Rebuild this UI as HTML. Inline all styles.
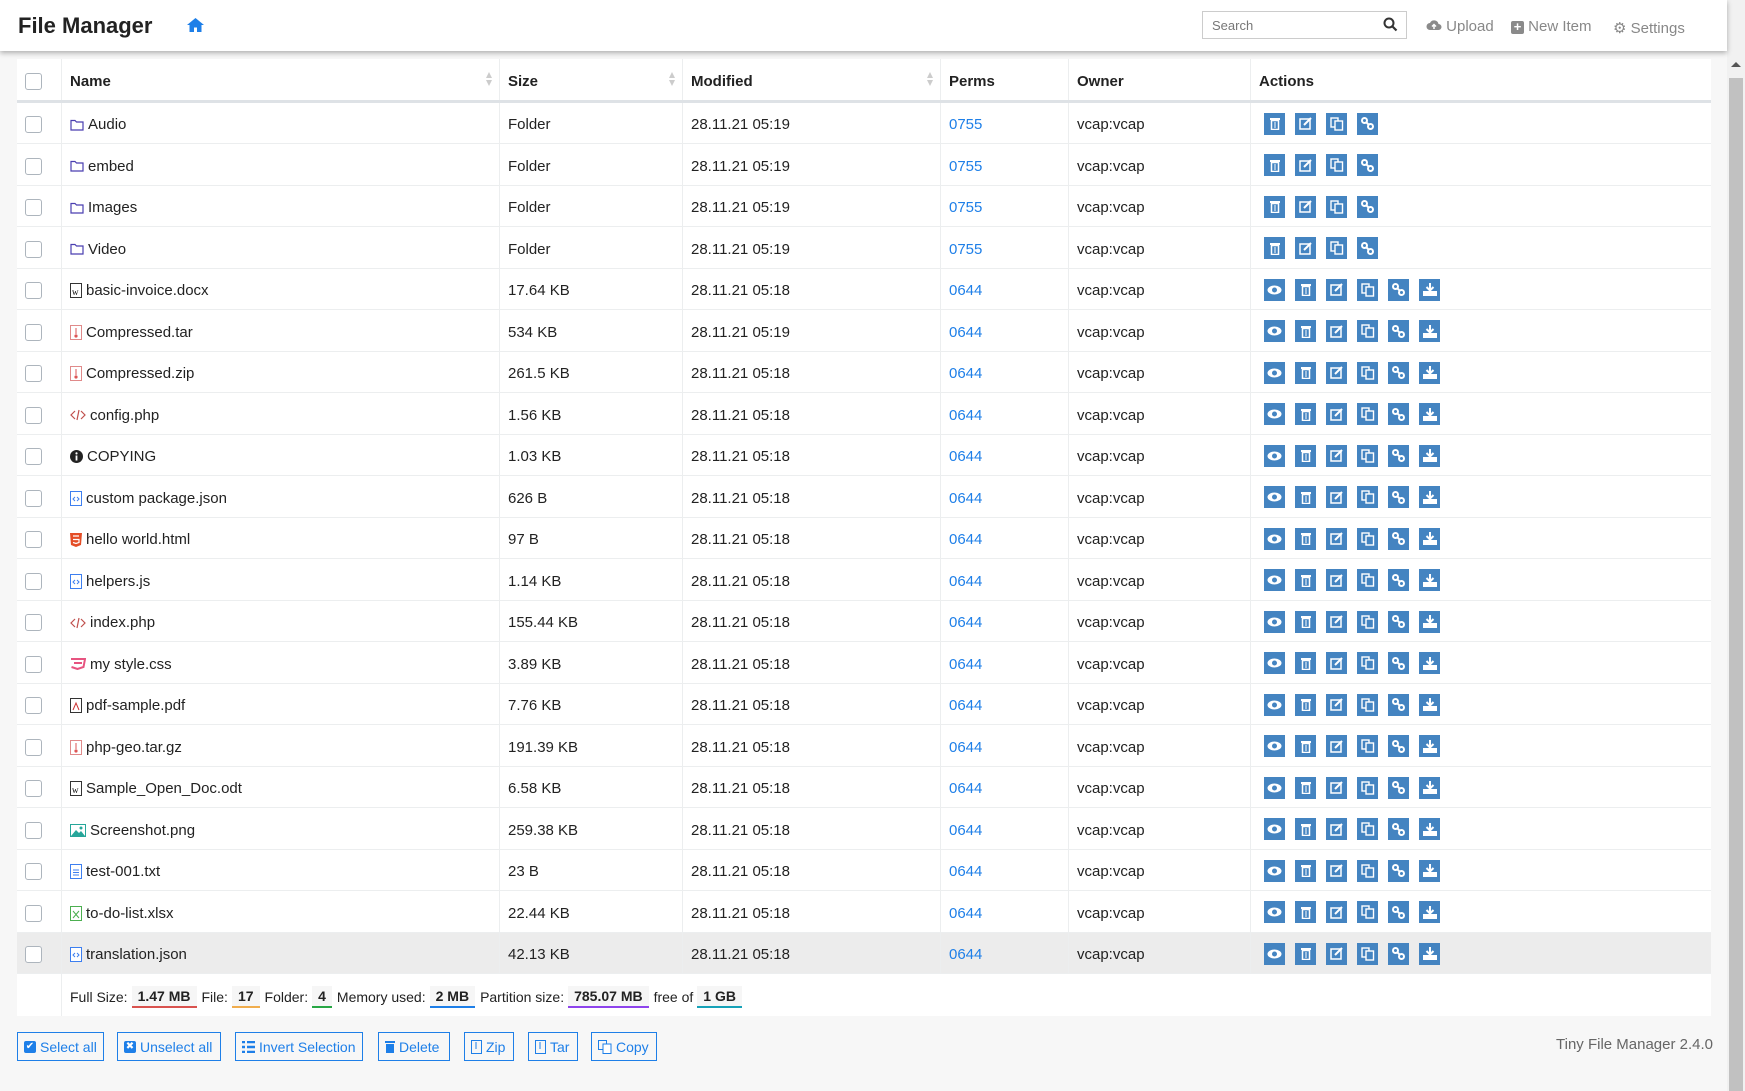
<!DOCTYPE html>
<html><head><meta charset="utf-8"><style>
*{box-sizing:border-box;margin:0;padding:0}
body{width:1745px;height:1091px;overflow:hidden;background:#f7f7f7;font-family:"Liberation Sans",sans-serif;font-size:15px;color:#222;position:relative}
.hdr{position:absolute;left:0;top:0;width:1727px;height:51px;background:#fff;box-shadow:0 2px 5px rgba(0,0,0,.3);z-index:2}
.title{position:absolute;left:18px;top:13px;font-size:22px;font-weight:bold;color:#222}
.search{position:absolute;left:1202px;top:11px;width:205px;height:28px;border:1px solid #ccc;background:#fff;font-size:13px;color:#777;padding:6px 9px}
.nav{position:absolute;top:18px;font-size:15px;color:#888;white-space:nowrap}
.sb{position:absolute;left:1727px;top:0;width:18px;height:1091px;background:#f1f1f1}
.sbt{position:absolute;left:1729px;top:78px;width:14px;height:1013px;background:#c1c1c1}
.tbl{position:absolute;left:17px;top:59px;width:1694px;background:#fff}
.row{position:absolute;left:0;width:1694px;height:41.5px;border-bottom:1px solid #eceeef}
.cell{position:absolute;top:0;height:100%;border-left:1px solid #eceeef;display:flex;align-items:center;padding-left:8px;padding-top:4px;white-space:nowrap}
.c0{left:0;width:44px;border-left:none;padding-left:8px}
.c1{left:44px;width:438px}.c2{left:482px;width:183px}.c3{left:665px;width:258px}.c4{left:923px;width:128px}.c5{left:1051px;width:182px}.c6{left:1233px;width:461px}
.cb{width:17px;height:17px;border:1px solid #adb5bd;border-radius:3px;background:#fff}
.th{font-weight:bold}
.sort{position:absolute;right:6px;top:12px;width:8px;height:16px}
.perm{color:#1e7fe8}
.ab{width:21px;height:22px;background:#4484c1;margin-right:10px;display:inline-flex;align-items:center;justify-content:center}
.fi{margin-right:4px;display:inline-flex}
.btn{position:absolute;top:1032px;height:29px;border:1px solid #1e7fe8;color:#1e7fe8;font-size:14px;display:flex;align-items:center;padding:0 6px;gap:4px;white-space:nowrap}
.bd{display:inline-block;font-weight:bold;font-size:14px;padding:2px 6px 2px;background:#f6f6f6;margin:0 5px 0 4px;border-bottom:2px solid}
</style></head><body>
<div class="hdr">
<div class="title">File Manager</div>
<svg style="position:absolute;left:186px;top:17px" width="19" height="16" viewBox="0 0 19 16"><path d="M9.5 1L1 8h2.5v7h4.5v-4.5h3V15h4.5V8H18z" fill="#1e7fe8"/></svg>
<div class="search">Search</div>
<svg style="position:absolute;left:1383px;top:17px" width="15" height="15" viewBox="0 0 15 15"><circle cx="6" cy="6" r="4.5" fill="none" stroke="#333" stroke-width="2"/><path d="M9.5 9.5l4 4" stroke="#333" stroke-width="2.2"/></svg>
<div class="nav" style="left:1426px"><svg width="16" height="12" viewBox="0 0 16 12"><path d="M4 11a3.5 3.5 0 010-7 4.5 4.5 0 018.5 1A3 3 0 0112.5 11z" fill="#8a8a8a"/><path d="M8 10V5.5M6 7.5l2-2 2 2" stroke="#fff" stroke-width="1.5" fill="none"/></svg> Upload</div>
<div class="nav" style="left:1511px"><span style="display:inline-block;width:13px;height:13px;background:#8a8a8a;border-radius:2px;color:#fff;font-size:13px;line-height:12px;text-align:center;font-weight:bold">+</span> New Item</div>
<div class="nav" style="left:1613px;top:19px">⚙ Settings</div>
</div>
<div class="sb"></div><div class="sbt"></div>
<div style="position:absolute;left:1731px;top:57px;width:0;height:0;border:5px solid transparent;border-bottom-color:#555"></div>

<div class="tbl" id="t" style="height:957px">
<div class="row" style="top:0;height:43.5px;border-bottom:3px solid #dee2e6">
<div class="cell c0"><div class="cb"></div></div>
<div class="cell c1 th">Name<svg class="sort" viewBox="0 0 8 16"><path d="M4 1L7 7H1zM4 15L7 9H1z" fill="#ccc"/></svg></div>
<div class="cell c2 th">Size<svg class="sort" viewBox="0 0 8 16"><path d="M4 1L7 7H1zM4 15L7 9H1z" fill="#ccc"/></svg></div>
<div class="cell c3 th">Modified<svg class="sort" viewBox="0 0 8 16"><path d="M4 1L7 7H1zM4 15L7 9H1z" fill="#ccc"/></svg></div>
<div class="cell c4 th">Perms</div>
<div class="cell c5 th">Owner</div>
<div class="cell c6 th">Actions</div>
</div>
</div>

<div class="btn" style="left:17px;width:87px"><span style="display:inline-block;width:12px;height:12px;background:#1e7fe8;border-radius:2px;color:#fff;font-size:10px;line-height:12px;text-align:center">✔</span>Select all</div>
<div class="btn" style="left:117px;width:104px"><span style="display:inline-block;width:12px;height:12px;background:#1e7fe8;border-radius:2px;color:#fff;font-size:10px;line-height:12px;text-align:center">✖</span>Unselect all</div>
<div class="btn" style="left:235px;width:128px"><svg width="13" height="12"><path d="M0 1h3M5 1h8M0 6h3M5 6h8M0 11h3M5 11h8" stroke="#1e7fe8" stroke-width="2.4"/></svg>Invert Selection</div>
<div class="btn" style="left:378px;width:72px"><svg width="10" height="13"><rect x="0" y="1" width="10" height="2" fill="#1e7fe8"/><rect x="1" y="4" width="8" height="9" fill="#1e7fe8"/></svg>Delete</div>
<div class="btn" style="left:464px;width:50px"><svg width="11" height="14"><rect x=".5" y=".5" width="10" height="13" fill="none" stroke="#1e7fe8"/><path d="M5 2v7" stroke="#1e7fe8"/></svg>Zip</div>
<div class="btn" style="left:528px;width:50px"><svg width="11" height="14"><rect x=".5" y=".5" width="10" height="13" fill="none" stroke="#1e7fe8"/><path d="M5 2v7" stroke="#1e7fe8"/></svg>Tar</div>
<div class="btn" style="left:591px;width:66px"><svg width="14" height="14"><rect x=".5" y=".5" width="8" height="9" fill="none" stroke="#1e7fe8"/><rect x="5" y="4" width="8" height="9.5" fill="#fff" stroke="#1e7fe8"/></svg>Copy</div>
<div style="position:absolute;left:1556px;top:1036px;font-size:15px;color:#666">Tiny File Manager 2.4.0</div>

<script>
const I={
folder:'<svg width="14" height="12" viewBox="0 0 14 12"><path d="M1 1.5h4l1.5 1.5H13v8H1z" fill="none" stroke="#4a3fb0" stroke-width="1.2"/></svg>',
word:'<svg width="12" height="15"><rect x=".5" y=".5" width="11" height="14" fill="#fff" stroke="#333"/><text x="2" y="12" font-size="9" font-family="Liberation Serif">w</text></svg>',
zip:'<svg width="12" height="15"><rect x=".5" y=".5" width="11" height="14" fill="#fff" stroke="#e08a8a"/><path d="M6 3v6" stroke="#d55"/><circle cx="6" cy="11" r="1.6" fill="#d55"/></svg>',
code:'<svg width="16" height="12"><path d="M5 2L1 6l4 4M11 2l4 4-4 4M9 1L7 11" fill="none" stroke="#c0504d" stroke-width="1.2"/></svg>',
info:'<svg width="13" height="13"><circle cx="6.5" cy="6.5" r="6.5" fill="#222"/><rect x="5.6" y="5.5" width="1.8" height="5" fill="#fff"/><circle cx="6.5" cy="3.4" r="1.1" fill="#fff"/></svg>',
json:'<svg width="12" height="15"><rect x=".5" y=".5" width="11" height="14" fill="#fff" stroke="#3d7ff0"/><path d="M5 6L3 8l2 2M7 6l2 2-2 2" fill="none" stroke="#3d7ff0"/></svg>',
html:'<svg width="12" height="14"><path d="M0 0h12l-1 12-5 2-5-2z" fill="#e44d26"/><path d="M3 3h6M3 6.5h6v3l-3 1-3-1" fill="none" stroke="#fff" stroke-width="1.2"/></svg>',
css:'<svg width="16" height="12"><path d="M1 1h14l-1.5 8-6 2-6-2" fill="none" stroke="#e75480" stroke-width="2"/><path d="M4 5h8" stroke="#e75480" stroke-width="2"/></svg>',
pdf:'<svg width="12" height="15"><rect x=".5" y=".5" width="11" height="14" fill="#fff" stroke="#333"/><path d="M3 12l3-7 3 7" fill="none" stroke="#c33"/></svg>',
img:'<svg width="16" height="13"><rect x=".5" y=".5" width="15" height="12" fill="#fff" stroke="#26a69a"/><path d="M1 12l5-6 3 3 2-2 4 5z" fill="#26a69a"/><circle cx="11" cy="4" r="1.5" fill="#26a69a"/></svg>',
txt:'<svg width="12" height="15"><rect x=".5" y=".5" width="11" height="14" fill="#fff" stroke="#3d7ff0"/><path d="M3 6h6M3 8.5h6M3 11h6" stroke="#3d7ff0"/></svg>',
xls:'<svg width="12" height="15"><rect x=".5" y=".5" width="11" height="14" fill="#fff" stroke="#4caf50"/><path d="M3 5l6 7M9 5l-6 7" stroke="#4caf50"/></svg>'
};
const A={
eye:'<svg width="15" height="10"><ellipse cx="7.5" cy="5" rx="7" ry="4.5" fill="#fff"/><circle cx="7.5" cy="5" r="2.5" fill="#4484c1"/></svg>',
del:'<svg width="10" height="13"><rect x="0" y="1" width="10" height="2" fill="#fff"/><rect x="1.5" y="3.5" width="7" height="9" fill="none" stroke="#fff" stroke-width="1.5"/><path d="M5 5v6" stroke="#fff"/></svg>',
edit:'<svg width="14" height="13"><rect x="1" y="2" width="10" height="10" fill="none" stroke="#fff" stroke-width="1.5"/><path d="M5 8l7-7" stroke="#fff" stroke-width="2"/></svg>',
copy:'<svg width="14" height="14"><rect x="1" y="1" width="7" height="9" fill="none" stroke="#fff" stroke-width="1.4"/><rect x="5" y="4" width="7.5" height="9" fill="#4484c1" stroke="#fff" stroke-width="1.4"/></svg>',
link:'<svg width="13" height="13"><circle cx="3.5" cy="3.5" r="2.5" fill="none" stroke="#fff" stroke-width="2"/><circle cx="9.5" cy="9.5" r="2.5" fill="none" stroke="#fff" stroke-width="2"/><path d="M5 5l3 3" stroke="#fff" stroke-width="2"/></svg>',
dl:'<svg width="14" height="13"><path d="M7 0v7M3.5 4L7 7.5 10.5 4" fill="none" stroke="#fff" stroke-width="2"/><rect x="0" y="8" width="14" height="5" fill="#fff"/></svg>'
};
const rows=[
['folder','Audio','Folder','05:19','0755',1],['folder','embed','Folder','05:19','0755',1],['folder','Images','Folder','05:19','0755',1],['folder','Video','Folder','05:19','0755',1],
['word','basic-invoice.docx','17.64 KB','05:18'],['zip','Compressed.tar','534 KB','05:19'],['zip','Compressed.zip','261.5 KB','05:18'],['code','config.php','1.56 KB','05:18'],['info','COPYING','1.03 KB','05:18'],['json','custom package.json','626 B','05:18'],['html','hello world.html','97 B','05:18'],['json','helpers.js','1.14 KB','05:18'],['code','index.php','155.44 KB','05:18'],['css','my style.css','3.89 KB','05:18'],['pdf','pdf-sample.pdf','7.76 KB','05:18'],['zip','php-geo.tar.gz','191.39 KB','05:18'],['word','Sample_Open_Doc.odt','6.58 KB','05:18'],['img','Screenshot.png','259.38 KB','05:18'],['txt','test-001.txt','23 B','05:18'],['xls','to-do-list.xlsx','22.44 KB','05:18'],['json','translation.json','42.13 KB','05:18']];
let h='';
rows.forEach((r,i)=>{
 const top=43.5+i*41.5;
 const acts=(r[5]?['del','edit','copy','link']:['eye','del','edit','copy','link','dl']).map(k=>'<span class="ab">'+A[k]+'</span>').join('');
 h+=`<div class="row" style="top:${top}px;${i==20?'background:#ececec;':''}"><div class="cell c0"><div class="cb"></div></div><div class="cell c1"><span class="fi">${I[r[0]]}</span>${r[1]}</div><div class="cell c2">${r[2]}</div><div class="cell c3">28.11.21 ${r[3]}</div><div class="cell c4 perm">${r[4]||'0644'}</div><div class="cell c5">vcap:vcap</div><div class="cell c6" style="padding-left:13px;padding-top:2px">${acts}</div></div>`;
});
h+=`<div class="row" style="top:${43.5+21*41.5}px;height:42px;border-bottom:none"><div class="cell c0"></div><div class="cell c1" style="width:1650px;font-size:14px">Full Size:<span class="bd" style="border-color:#d9534f">1.47 MB</span>File:<span class="bd" style="border-color:#f0ad4e">17</span>Folder:<span class="bd" style="border-color:#28a745">4</span>Memory used:<span class="bd" style="border-color:#1e7fe8">2 MB</span>Partition size:<span class="bd" style="border-color:#8e44ec">785.07 MB</span>free of<span class="bd" style="border-color:#17a2b8">1 GB</span></div></div>`;
document.getElementById('t').insertAdjacentHTML('beforeend',h);
</script>
</body></html>
